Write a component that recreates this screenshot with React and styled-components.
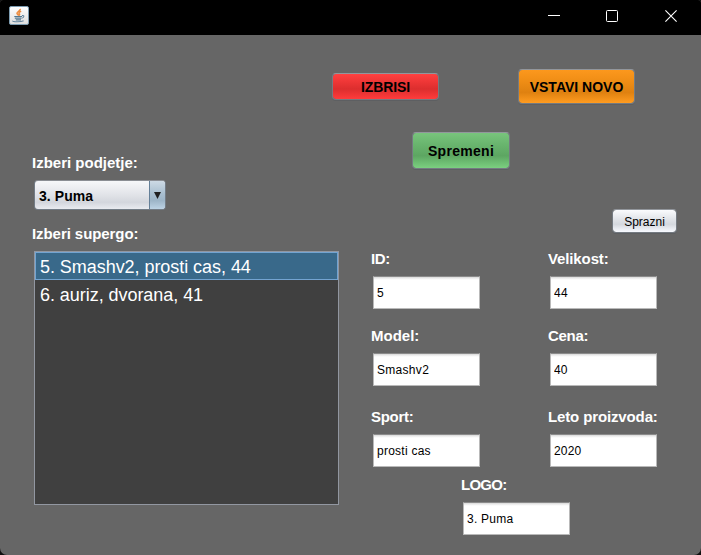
import React from "react";
import styled, { createGlobalStyle } from "styled-components";

const GlobalStyle = createGlobalStyle`
  * { box-sizing: border-box; }
  html, body { margin: 0; padding: 0; background: #101010; }
  body {
    width: 701px;
    height: 555px;
    overflow: hidden;
    font-family: "Liberation Sans", Arial, sans-serif;
  }
`;

const Window = styled.div`
  width: 701px;
  height: 555px;
  display: flex;
  flex-direction: column;
  background: #666666;
  border-radius: 3px 3px 7px 7px;
  overflow: hidden;
`;

const TitleBar = styled.header`
  height: 35px;
  flex: none;
  display: flex;
  align-items: flex-start;
  justify-content: space-between;
  padding: 6px 24px 0 9px;
  background: #000;
`;

const AppIcon = styled.svg`
  width: 20px;
  height: 19px;
  display: block;
`;

const WindowControls = styled.div`
  display: flex;
  gap: 47px;
  padding-top: 4px;

  svg { display: block; }
  svg:first-child { margin-right: -1px; }
`;

const Content = styled.main`
  flex: 1;
  display: flex;
`;

const Selection = styled.section`
  width: 339px;
  flex: none;
  display: flex;
  flex-direction: column;
  padding: 118px 0 0 32px;
`;

const Details = styled.section`
  width: 362px;
  display: flex;
  flex-direction: column;
  padding-top: 34px;
`;

const Label = styled.label`
  display: block;
  height: 20px;
  line-height: 20px;
  font-size: 15px;
  font-weight: 700;
  letter-spacing: ${(p) => p.$tracking || 0}px;
  color: #fff;
  white-space: nowrap;
`;

const ComboBox = styled.div`
  width: 132px;
  height: 30px;
  margin: 7px 0 14px 2px;
  display: flex;
  border: 1px solid #737c86;
  border-top-color: #8b8e94;
  border-radius: 4px;
  overflow: hidden;
  background: linear-gradient(#f7f8fa, #e1e3e8 50%, #d3d6dd 76%, #e9ebf0);
`;

const ComboValue = styled.div`
  flex: 1;
  padding-left: 4px;
  line-height: 31px;
  font-size: 14px;
  font-weight: 700;
  letter-spacing: 0.06px;
  color: #000;
`;

const ComboArrow = styled.div`
  width: 16px;
  display: flex;
  align-items: center;
  justify-content: center;
  border-left: 1px solid #647f98;
  background: linear-gradient(#cddae5, #a9bfd0 45%, #9db5c8 70%, #bdd3e5);
`;

const List = styled.ul`
  width: 305px;
  height: 254px;
  margin: 7px 0 0 2px;
  padding: 0;
  list-style: none;
  border: 1px solid #9297a1;
  background: #404040;
`;

const ListItem = styled.li`
  height: 28px;
  padding-left: ${(p) => (p.$selected ? 4 : 5)}px;
  line-height: ${(p) => (p.$selected ? 28 : 30)}px;
  font-size: 18px;
  letter-spacing: -0.05px;
  color: #fff;
  border: ${(p) => (p.$selected ? "1px solid #73a4d1" : "0")};
  background: ${(p) => (p.$selected ? "#39698a" : "transparent")};
  white-space: nowrap;
`;

const tones = {
  red: "linear-gradient(#ff4141, #ee3636 32%, #dc2e2e 60%, #ff3c3c)",
  orange: "linear-gradient(#fc981d, #ef8d15 35%, #df8110 68%, #ff9c20)",
  green: "linear-gradient(#78c47c, #68b46d 35%, #5da662 65%, #7bd080)",
  light: "linear-gradient(#fafbfd, #dfe2e7 45%, #d4d8de 65%, #f8faff)",
};

const Button = styled.button`
  width: ${(p) => p.$width}px;
  height: ${(p) => p.$height}px;
  padding: ${(p) => p.$drop || 0}px 0 0;
  border: 1px solid #747a81;
  border-top-color: #92969c;
  border-radius: 4px;
  background: ${(p) => tones[p.$tone]} padding-box;
  box-shadow: 0 1px 0 #5d5f62;
  font-family: inherit;
  font-size: ${(p) => p.$size || 14}px;
  font-weight: ${(p) => (p.$tone === "light" ? 400 : 700)};
  letter-spacing: ${(p) => p.$tracking || 0}px;
  color: #000;
  white-space: nowrap;
`;

const ActionRow = styled.div`
  width: 303px;
  height: 35px;
  margin-left: -7px;
  display: flex;
  align-items: center;
  justify-content: space-between;
`;

const ChangeRow = styled.div`
  height: 64px;
  padding: 28px 0 0 73px;
  display: flex;
  align-items: flex-start;
`;

const ClearRow = styled.div`
  height: 64px;
  padding: 41px 24px 0 0;
  display: flex;
  align-items: flex-start;
  justify-content: flex-end;
`;

const Fields = styled.form`
  display: grid;
  grid-template-columns: 177px 177px;
  grid-template-rows: 77px 81px 68px;
  padding: 17px 0 0 32px;
`;

const Field = styled.div`
  display: flex;
  flex-direction: column;
  gap: 7px;
`;

const LogoField = styled(Field)`
  grid-column: 1 / -1;
  padding-left: 90px;
`;

const Input = styled.input`
  width: 107px;
  height: 33px;
  margin-left: 2px;
  padding: 1px 3px 0;
  border: 1px solid #b9b9b9;
  border-top-color: #8a8a8a;
  border-radius: 0;
  outline: 0;
  background: linear-gradient(#d8d8d8, #f6f6f6 2px, #fff 3px);
  font-family: inherit;
  font-size: 12px;
  letter-spacing: ${(p) => p.$tracking || 0}px;
  color: #000;
`;

const fields = [
  { id: "id", label: "ID:", value: "5", labelTracking: -0.4 },
  { id: "size", label: "Velikost:", value: "44", labelTracking: -0.12, tracking: 0.3 },
  { id: "model", label: "Model:", value: "Smashv2", tracking: 0.3 },
  { id: "price", label: "Cena:", value: "40", labelTracking: -0.3, tracking: 0.2 },
  { id: "sport", label: "Sport:", value: "prosti cas", labelTracking: -0.3, tracking: 0.25 },
  { id: "year", label: "Leto proizvoda:", value: "2020", labelTracking: -0.13, tracking: 0.2 },
];

function JavaIcon() {
  return (
    <AppIcon viewBox="0 0 20 19">
      <defs>
        <linearGradient id="tile" x1="0" y1="0" x2="0" y2="1">
          <stop offset="0" stopColor="#ffffff" />
          <stop offset="1" stopColor="#dedede" />
        </linearGradient>
      </defs>
      <rect x="0.5" y="0.5" width="19" height="18" rx="1.5" fill="url(#tile)" stroke="#7d9cb1" />
      <path d="M11.3 2.9C11.6 5 7.3 5.6 8 7.6L9.7 9.5M12.2 5.3C9.3 6.3 9.6 7.2 10.6 8.2L10 9.8" fill="none" stroke="#ec8a3c" strokeWidth="1.5" />
      <path d="M5.3 10.5H13M5.8 12.2H12.2M6.8 13.8H12" fill="none" stroke="#54788f" strokeWidth="1.2" />
      <path d="M13 9.6C15.8 8.9 15.2 11.8 12.4 12.3M3.6 14.7C3 16.1 12 16.2 14.6 14.8" fill="none" stroke="#64859e" strokeWidth="1.1" />
    </AppIcon>
  );
}

export default function App() {
  return (
    <>
      <GlobalStyle />
      <Window>
        <TitleBar>
          <JavaIcon />
          <WindowControls>
            <svg width="12" height="12">
              <path d="M0 5.5H12" stroke="#fff" />
            </svg>
            <svg width="12" height="12">
              <rect x="0.5" y="0.5" width="11" height="11" rx="1" fill="none" stroke="#fff" />
            </svg>
            <svg width="12" height="12">
              <path d="M0.4 0.4L11.6 11.6M11.6 0.4L0.4 11.6" stroke="#fff" strokeWidth="1.1" />
            </svg>
          </WindowControls>
        </TitleBar>
        <Content>
          <Selection>
            <Label>Izberi podjetje:</Label>
            <ComboBox>
              <ComboValue>3. Puma</ComboValue>
              <ComboArrow>
                <svg width="7" height="7">
                  <path d="M0 0H7L3.5 7Z" fill="#202020" />
                </svg>
              </ComboArrow>
            </ComboBox>
            <Label $tracking={-0.07}>Izberi supergo:</Label>
            <List>
              <ListItem $selected>5. Smashv2, prosti cas, 44</ListItem>
              <ListItem>6. auriz, dvorana, 41</ListItem>
            </List>
          </Selection>
          <Details>
            <ActionRow>
              <Button $tone="red" $width={107} $height={27} $tracking={-0.1}>IZBRISI</Button>
              <Button $tone="orange" $width={117} $height={35} $drop={1}>VSTAVI NOVO</Button>
            </ActionRow>
            <ChangeRow>
              <Button $tone="green" $width={98} $height={37} $drop={1} $tracking={0.3}>Spremeni</Button>
            </ChangeRow>
            <ClearRow>
              <Button $tone="light" $width={65} $height={24} $size={12} $drop={1}>Sprazni</Button>
            </ClearRow>
            <Fields>
              {fields.map((f) => (
                <Field key={f.id}>
                  <Label htmlFor={f.id} $tracking={f.labelTracking}>{f.label}</Label>
                  <Input id={f.id} defaultValue={f.value} $tracking={f.tracking} />
                </Field>
              ))}
              <LogoField>
                <Label htmlFor="logo" $tracking={-0.75}>LOGO:</Label>
                <Input id="logo" defaultValue="3. Puma" $tracking={0.25} />
              </LogoField>
            </Fields>
          </Details>
        </Content>
      </Window>
    </>
  );
}
